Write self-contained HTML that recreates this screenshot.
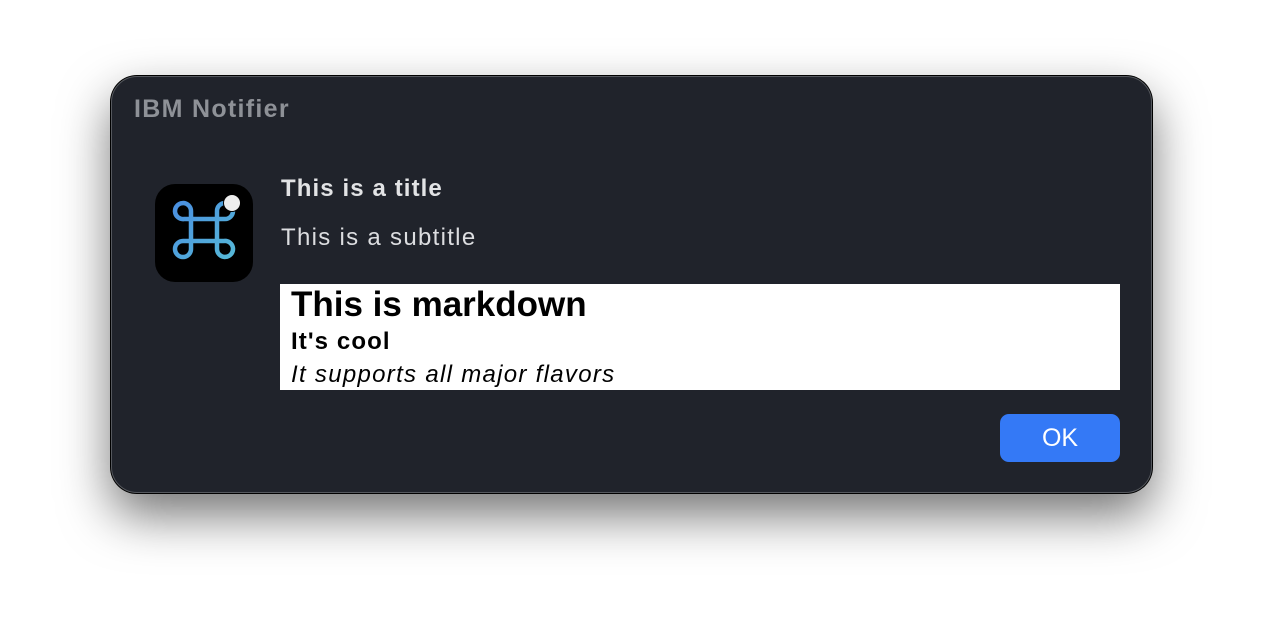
<!DOCTYPE html>
<html><head><style>
html,body{margin:0;width:1264px;height:642px;background:#fff;overflow:hidden;font-family:"Liberation Sans",sans-serif}
.win{position:absolute;left:111px;top:76px;width:1039px;height:415px;background:#20232b;border-radius:26px;border:1px solid #55585e;box-shadow:0 22px 50px rgba(0,0,0,0.55),0 0 0 1px #000}
.t{position:absolute;left:22px;top:18px;color:#8e9197;font-weight:bold;font-size:25px;letter-spacing:1.3px}
.icon{position:absolute;left:43px;top:107px}
.h{position:absolute;left:169px;top:98px;color:#e2e3e5;font-weight:bold;font-size:24px;letter-spacing:1.1px}
.s{position:absolute;left:169px;top:147px;color:#dcdde0;font-size:24px;letter-spacing:1.3px}
.md{position:absolute;left:168px;top:207px;width:840px;height:106px;background:#fff;color:#000}
.md div{position:absolute;left:11px;white-space:nowrap}
.ok{position:absolute;left:888px;top:337px;width:120px;height:48px;background:#3479f6;border-radius:9px;color:#fff;font-size:25px;text-align:center;line-height:48px}
</style></head><body>
<div class="win">
<div class="t">IBM Notifier</div>
<svg class="icon" width="98" height="98" viewBox="0 0 98 98">
<defs><linearGradient id="g" x1="0" y1="0" x2="1" y2="1"><stop offset="0" stop-color="#4a8fe0"/><stop offset="1" stop-color="#56b8d8"/></linearGradient></defs>
<rect width="98" height="98" rx="20" fill="#000"/>
<path d="M36,34 H29 A8,8 0 1 1 36,26 V64 A8,8 0 1 1 28,56 H69 A8,8 0 1 1 62,64 V26 A8,8 0 1 1 70,34 Z" transform="translate(0,1)" fill="none" stroke="url(#g)" stroke-width="4.5"/>
<circle cx="77" cy="19" r="9" fill="#000"/>
<circle cx="77" cy="19" r="8" fill="#eeeeee"/>
</svg>
<div class="h">This is a title</div>
<div class="s">This is a subtitle</div>
<div class="md">
<div style="top:1px;font-size:35px;font-weight:bold">This is markdown</div>
<div style="top:44px;font-size:24px;font-weight:bold;letter-spacing:1.1px">It's cool</div>
<div style="top:77px;font-size:24px;font-style:italic;letter-spacing:1.3px">It supports all major flavors</div>
</div>
<div class="ok">OK</div>
</div>
</body></html>
